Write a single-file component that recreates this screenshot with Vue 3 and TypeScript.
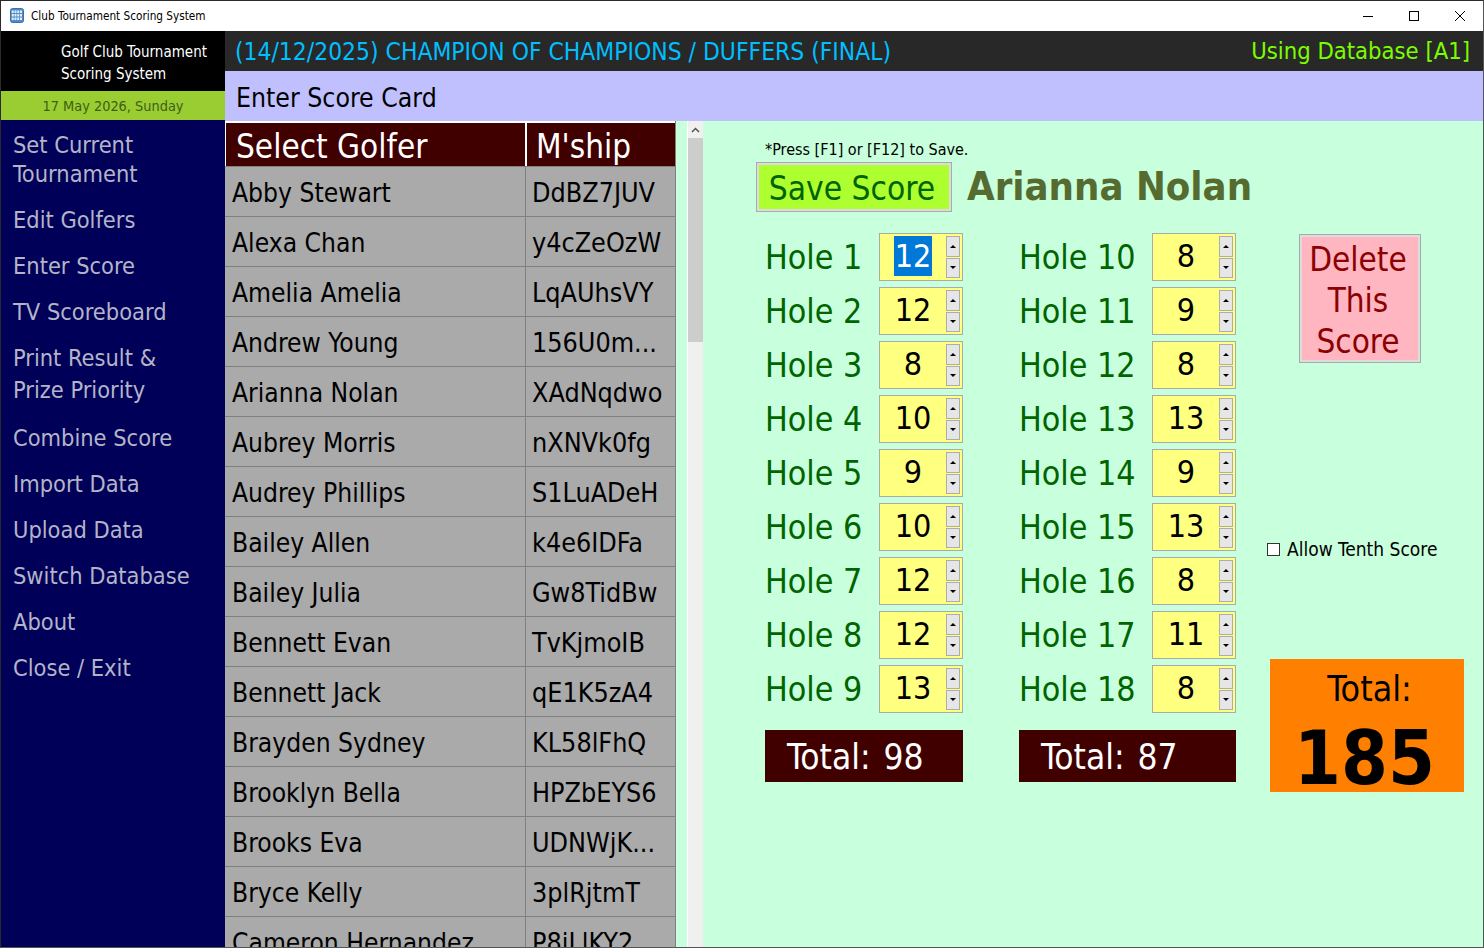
<template>
  <div class="window">
    <header class="titlebar">
      <svg class="app-icon" width="14" height="15" viewBox="0 0 14 15">
        <rect x="0.5" y="0.5" width="13" height="14" rx="2" fill="#4f8ccb" stroke="#3d70a8" />
        <g fill="#e4ecf6">
          <rect v-for="c in iconCells" :key="c.x + '-' + c.y" :x="c.x" :y="c.y" width="2" height="2.5" />
        </g>
      </svg>
      <span class="title-text">Club Tournament Scoring System</span>
      <div class="win-buttons">
        <svg width="12" height="12" viewBox="0 0 12 12"><path d="M1 6.5h10" stroke="#000" fill="none" /></svg>
        <svg width="12" height="12" viewBox="0 0 12 12"><rect x="1.5" y="1.5" width="9" height="9" stroke="#000" fill="none" /></svg>
        <svg width="12" height="12" viewBox="0 0 12 12"><path d="M1 1l10 10M11 1L1 11" stroke="#000" fill="none" /></svg>
      </div>
    </header>

    <div class="app">
      <aside class="sidebar">
        <div class="brand">Golf Club Tournament<br />Scoring System</div>
        <div class="date">17 May 2026, Sunday</div>
        <nav class="nav">
          <a v-for="item in navItems" :key="item" class="nav-item">{{ item }}</a>
        </nav>
      </aside>

      <main class="main">
        <div class="topbar">
          <span class="event">(14/12/2025) CHAMPION OF CHAMPIONS / DUFFERS (FINAL)</span>
          <span class="db">Using Database [A1]</span>
        </div>
        <div class="subhead">Enter Score Card</div>

        <div class="content">
          <section class="golfers">
            <div class="golfer-head">
              <div class="col-name">Select Golfer</div>
              <div class="col-ship">M'ship</div>
            </div>
            <div v-for="g in golfers" :key="g.name" class="golfer-row">
              <div class="col-name">{{ g.name }}</div>
              <div class="col-ship">{{ g.ship }}</div>
            </div>
          </section>

          <div class="scrollbar">
            <div class="scroll-up">
              <svg width="9" height="6" viewBox="0 0 9 6"><path d="M1 5l3.5-3.5L8 5" stroke="#555" stroke-width="1.5" fill="none" /></svg>
            </div>
            <div class="scroll-thumb"></div>
          </div>

          <section class="score-panel">
            <p class="hint">*Press [F1] or [F12] to Save.</p>
            <div class="save-row">
              <button class="save-btn">Save Score</button>
              <h1 class="golfer-name">Arianna Nolan</h1>
            </div>

            <div class="score-columns">
              <div v-for="(col, c) in columns" :key="c" class="hole-col">
                <div v-for="h in col.holes" :key="h.hole" class="hole-row">
                  <span class="hole-label">Hole {{ h.hole }}</span>
                  <div class="spinner">
                    <div class="spin-value">
                      <span :class="{ selected: h.hole === 1 }">{{ h.score }}</span>
                    </div>
                    <div class="spin-btns">
                      <div class="spin-btn"><i class="tri-up"></i></div>
                      <div class="spin-btn"><i class="tri-down"></i></div>
                    </div>
                  </div>
                </div>
                <div class="sub-total">Total: {{ col.total }}</div>
              </div>

              <div class="side-col">
                <button class="delete-btn">Delete<br />This<br />Score</button>
                <label class="tenth"><i class="check"></i>Allow Tenth Score</label>
                <div class="grand-total">
                  <div class="grand-label">Total:</div>
                  <div class="grand-value">185</div>
                </div>
              </div>
            </div>
          </section>
        </div>
      </main>
    </div>
  </div>
</template>

<script setup lang="ts">
interface Golfer {
  name: string;
  ship: string;
}

const navItems = [
  "Set Current Tournament",
  "Edit Golfers",
  "Enter Score",
  "TV Scoreboard",
  "Print Result & Prize Priority",
  "Combine Score",
  "Import Data",
  "Upload Data",
  "Switch Database",
  "About",
  "Close / Exit"
];

const golfers: Golfer[] = [
  { name: "Abby Stewart", ship: "DdBZ7JUV" },
  { name: "Alexa Chan", ship: "y4cZeOzW" },
  { name: "Amelia Amelia", ship: "LqAUhsVY" },
  { name: "Andrew Young", ship: "156U0m..." },
  { name: "Arianna Nolan", ship: "XAdNqdwo" },
  { name: "Aubrey Morris", ship: "nXNVk0fg" },
  { name: "Audrey Phillips", ship: "S1LuADeH" },
  { name: "Bailey Allen", ship: "k4e6IDFa" },
  { name: "Bailey Julia", ship: "Gw8TidBw" },
  { name: "Bennett Evan", ship: "TvKjmoIB" },
  { name: "Bennett Jack", ship: "qE1K5zA4" },
  { name: "Brayden Sydney", ship: "KL58lFhQ" },
  { name: "Brooklyn Bella", ship: "HPZbEYS6" },
  { name: "Brooks Eva", ship: "UDNWjK..." },
  { name: "Bryce Kelly", ship: "3plRjtmT" },
  { name: "Cameron Hernandez", ship: "P8iLlKY2" }
];

const front = [12, 12, 8, 10, 9, 10, 12, 12, 13];
const back = [8, 9, 8, 13, 9, 13, 8, 11, 8];

const toHoles = (scores: number[], start: number) =>
  scores.map((score, i) => ({ hole: start + i, score }));

const columns = [
  { holes: toHoles(front, 1), total: 98 },
  { holes: toHoles(back, 10), total: 87 }
];

// 4x3 grid of cells in the title bar icon
const iconCells: { x: number; y: number }[] = [];
for (let row = 0; row < 3; row++) {
  for (let col = 0; col < 4; col++) {
    iconCells.push({ x: 1.75 + col * 2.75, y: 2.5 + row * 3.5 });
  }
}
</script>

<style>
html,
body {
  margin: 0;
  overflow: hidden;
}
</style>

<style scoped>
* {
  box-sizing: border-box;
}

.window {
  width: 1484px;
  height: 948px;
  display: flex;
  flex-direction: column;
  overflow: hidden;
  border-top: 1px solid #2a2a2a;
  border-left: 1px solid #2a2a2a;
  border-right: 1px solid #555;
  border-bottom: 1px solid #555;
  font-family: "DejaVu Sans Condensed", "DejaVu Sans", sans-serif;
  background: #c8ffdc;
}

.titlebar {
  height: 30px;
  flex: none;
  display: flex;
  align-items: center;
  padding-left: 9px;
  background: #fff;
  color: #000;
  font-size: 11.7px;
}

.app-icon {
  margin-top: -2px;
}

.title-text {
  margin-left: 7px;
}

.win-buttons {
  margin-left: auto;
  display: flex;
  gap: 34px;
  padding-right: 17px;
}

.app {
  flex: 1;
  min-height: 0;
  display: flex;
}

.sidebar {
  width: 224px;
  flex: none;
  display: flex;
  flex-direction: column;
  background: #000058;
}

.brand {
  height: 60px;
  padding: 10px 0 0 60px;
  background: #000;
  color: #fff;
  font-size: 15px;
  line-height: 22px;
}

.date {
  height: 29px;
  text-align: center;
  line-height: 30px;
  font-size: 14.4px;
  background: #9acd32;
  color: #3f5f14;
}

.nav {
  display: flex;
  flex-direction: column;
  padding: 11px 12px 0;
  color: #b4b4c8;
  font-size: 23.4px;
  line-height: 29px;
}

.nav-item {
  margin-bottom: 17px;
}

.nav-item:nth-child(5) {
  margin-top: -2px;
  margin-bottom: 18px;
  line-height: 32px;
}

.main {
  flex: 1;
  min-width: 0;
  display: flex;
  flex-direction: column;
}

.topbar {
  height: 40px;
  flex: none;
  display: flex;
  justify-content: space-between;
  align-items: center;
  padding: 0 13px 0 10px;
  background: #282828;
}

.event {
  color: #00bfff;
  font-size: 24.4px;
}

.db {
  color: #7cfc00;
  font-size: 23.6px;
}

.subhead {
  height: 50px;
  flex: none;
  padding-left: 11px;
  line-height: 53px;
  font-size: 26.4px;
  background: #c0c0ff;
  color: #000;
}

.content {
  flex: 1;
  min-height: 0;
  display: flex;
  overflow: hidden;
}

.golfers {
  width: 451px;
  flex: none;
  border-right: 1px solid #808080;
  background: #aaa;
  overflow: hidden;
}

.golfer-head {
  display: flex;
  height: 45px;
  border-top: 2px solid #fff;
  border-left: 1px solid #fff;
  background: #400000;
  color: #fff;
  font-size: 33px;
  line-height: 48px;
}

.golfer-head .col-name {
  width: 301px;
  padding-left: 10px;
  border-right: 2px solid #fff;
}

.golfer-head .col-ship {
  padding-left: 9px;
}

.golfer-row {
  display: flex;
  height: 50px;
  border-top: 1px solid #808080;
  color: #000;
  line-height: 51px;
}

.golfer-row .col-name {
  width: 301px;
  padding-left: 7px;
  border-right: 1px solid #808080;
  font-size: 26.2px;
  line-height: 53px;
}

.golfer-row .col-ship {
  padding-left: 6px;
  font-size: 26.7px;
}

.scrollbar {
  width: 16px;
  flex: none;
  margin-left: 11px;
  border-left: 1px solid #fff;
  background: #f0f0f0;
}

.scroll-up {
  height: 17px;
  display: flex;
  align-items: center;
  justify-content: center;
}

.scroll-thumb {
  height: 204px;
  background: #cdcdcd;
}

.score-panel {
  flex: 1;
  min-width: 0;
  padding: 18px 0 0 62px;
}

.hint {
  margin: 0;
  font-size: 16px;
  line-height: 22px;
  color: #000;
}

.save-row {
  display: flex;
  align-items: center;
  margin: 1px 0 0 -9px;
}

.save-btn {
  width: 196px;
  height: 50px;
  padding: 2px 4px 0 0;
  border: 3px solid #dcdcdc;
  outline: 1px solid #aaa;
  outline-offset: -1px;
  background: #adff2f;
  color: #006400;
  font-family: inherit;
  font-size: 33.2px;
}

.golfer-name {
  margin: -3px 0 0 15px;
  font-size: 39.7px;
  font-weight: 700;
  color: #556b2f;
}

.score-columns {
  display: flex;
  margin-top: 21px;
}

.hole-col {
  width: 198px;
  margin-right: 56px;
}

.hole-col:nth-child(2) {
  width: 217px;
  margin-right: 31px;
}

.hole-row {
  display: flex;
  justify-content: space-between;
  align-items: center;
  height: 48px;
  margin-bottom: 6px;
}

.hole-label {
  font-size: 33.7px;
  color: #006400;
}

.spinner {
  width: 84px;
  height: 48px;
  display: flex;
  padding: 2px;
  border: 1px solid #aaa;
  background: #ffff80;
}

.spin-value {
  flex: 1;
  display: flex;
  justify-content: center;
  align-items: center;
  padding-right: 2px;
  font-size: 32px;
  color: #000;
}

.spin-value span {
  margin-top: -2px;
  padding: 0 0.5px;
  line-height: 40px;
}

.selected {
  background: #0078d7;
  color: #fff;
}

.spin-btns {
  width: 14px;
  display: flex;
  flex-direction: column;
  gap: 1px;
}

.spin-btn {
  flex: 1;
  display: flex;
  align-items: center;
  justify-content: center;
  border: 1px solid #adadad;
  background: #e6e6e6;
}

.tri-up,
.tri-down {
  width: 0;
  height: 0;
  border-left: 3px solid transparent;
  border-right: 3px solid transparent;
}

.tri-up {
  border-bottom: 3px solid #000;
}

.tri-down {
  border-top: 3px solid #000;
}

.sub-total {
  height: 52px;
  margin-top: 17px;
  padding-left: 22px;
  background: #400000;
  color: #fff;
  font-size: 35px;
  word-spacing: 3px;
  line-height: 55px;
}

.side-col {
  width: 197px;
  display: flex;
  flex-direction: column;
}

.delete-btn {
  align-self: flex-start;
  width: 122px;
  height: 129px;
  margin: 1px 0 0 32px;
  padding: 2px 4px 0 0;
  border: 3px solid #dcdcdc;
  outline: 1px solid #aaa;
  outline-offset: -1px;
  background: #ffb6c1;
  color: #8b0000;
  font-family: inherit;
  font-size: 33px;
  line-height: 41px;
}

.tenth {
  display: flex;
  align-items: center;
  margin: 175px 0 0;
  font-size: 19px;
  color: #000;
}

.check {
  width: 13px;
  height: 13px;
  margin-right: 7px;
  border: 1px solid #333;
  background: #fff;
}

.grand-total {
  height: 133px;
  margin: 99px 0 0 3px;
  text-align: center;
  background: #ff8000;
  color: #000;
}

.grand-label {
  padding: 9px 0 0 5px;
  font-size: 35.5px;
  line-height: 42px;
}

.grand-value {
  margin-top: 10px;
  padding-right: 5px;
  font-size: 75px;
  font-weight: 700;
  line-height: 76px;
}
</style>
